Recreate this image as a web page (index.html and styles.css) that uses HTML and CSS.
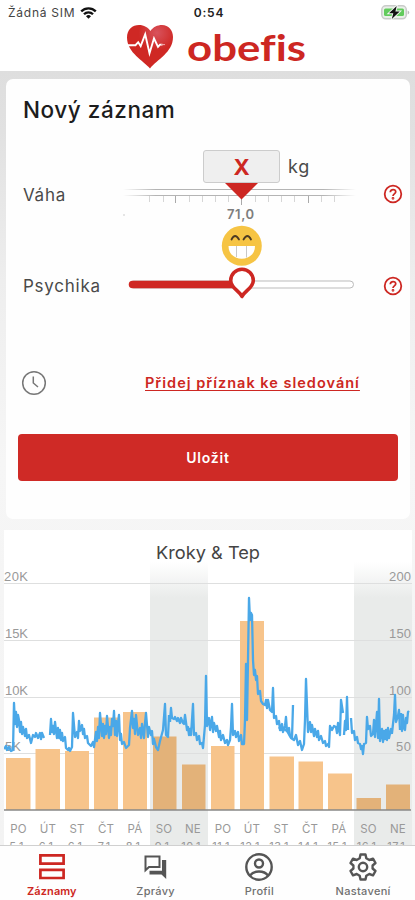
FILE: index.html
```html
<!DOCTYPE html>
<html lang="cs">
<head>
<meta charset="utf-8">
<title>obefis</title>
<link rel="stylesheet" href="styles.css">
</head>
<body>
<div class="app">
  <header class="header">
    <div class="status">
      <div class="carrier"><span class="sim">Žádná SIM</span>
        <svg width="17" height="12" viewBox="0 0 17 12" fill="none" stroke="#111" stroke-width="2.3"><path d="M1.2 4.4a10.3 10.3 0 0 1 14.6 0M4 7.3a6.3 6.3 0 0 1 9 0"/><path d="M6 9.2a3.6 3.6 0 0 1 5 0L8.5 11.8z" fill="#111" stroke="none"/></svg>
      </div>
      <span class="time">0:54</span>
      <svg class="battery" width="29" height="15" viewBox="0 0 29 15"><rect x=".8" y=".8" width="24.5" height="13" rx="4" fill="#e9f0e8" stroke="#c9cbc9" stroke-width="1.5"/><rect x="3" y="3.5" width="20" height="7.600" rx="1.500" fill="#62cb5c"/><path d="M26.7 5.500v4q1.500-.6 1.500-2t-1.500-2z" fill="#bbb"/><path d="M15.7 1 8 8.200h4.300L10.800 14l7.900-7.500h-4.300z" fill="#111" stroke="#f2f6f2" stroke-width="1.900" paint-order="stroke"/></svg>
    </div>
    <div class="brand">
      <svg width="48" height="45" viewBox="0 0 48 45">
        <defs><radialGradient id="shine" cx=".65" cy=".18" r=".4"><stop offset="0" stop-color="#d8535d"/><stop offset="1" stop-color="#cf2824"/></radialGradient></defs>
        <path d="M24 44.500C18 37 1 29 1 13.500 1 5.500 6.500 1 13 1c5 0 9 2.500 11.500 6C27 3 31.500 1 36 1c6.500 0 11 5 11 12 0 15.500-16 22.500-23 31.500z" fill="url(#shine)"/>
        <path d="M2 21.200h7.500l2.700-3 2.500 4 4.500-12 4.300 19L28 14.300l4 8.500 2-2.200h2.500" fill="none" stroke="#fff" stroke-width="1.900"/><path d="M35 20.600h4" stroke="#efaaaa" stroke-width="1"/>
      </svg>
      <svg width="122" height="40" viewBox="0 0 122 40"><text class="wordmark" x="0" y="35" textLength="119" lengthAdjust="spacingAndGlyphs">obefis</text></svg>
    </div>
  </header>

  <main class="content">
    <section class="card entry">
      <h1 class="title">Nový záznam</h1>
      <div class="row weight">
        <div class="label">Váha</div>
        <div class="control">
          <div class="input-line"><div class="value">X</div><span class="unit">kg</span></div>
          <svg class="ruler" width="240" height="23" viewBox="120 183 240 23">
            <defs><linearGradient id="fade" gradientUnits="userSpaceOnUse" x1="123" x2="356" y1="0" y2="0"><stop offset="0" stop-color="#b4b4b4" stop-opacity="0"/><stop offset=".14" stop-color="#b4b4b4"/><stop offset=".86" stop-color="#b4b4b4"/><stop offset="1" stop-color="#b4b4b4" stop-opacity="0"/></linearGradient></defs>
            <path d="M123 189h233v1H123zM123 195h233v1H123z" fill="url(#fade)"/>
            <path d="M149.500 196v6M163.500 196v6M189.500 196v6M202.500 196v6M215.500 196v6M228.500 196v6M255.500 196v6M268.500 196v6M281.500 196v6M294.500 196v6M321.500 196v6M334.500 196v6" stroke="#d6d6d6"/>
            <path d="M175.500 196v7M241.500 196v9M308.500 196v7" stroke="#aaa"/>
            <path d="M225 183h33l-16.500 16.500z" fill="#cd2722"/>
          </svg>
          <div class="scale"><i class="dot"></i><span class="reading">71,0</span></div>
        </div>
        <svg class="help" width="20" height="20" viewBox="0 0 20 20"><circle cx="10" cy="10" r="8.300"/><path d="M7.300 8.200C7.300 4.600 13 4.800 12.700 8c-.2 2-2.700 1.900-2.700 4.100"/><circle cx="10" cy="14.300" r=".5"/></svg>
      </div>
      <div class="row mood">
        <div class="label">Psychika</div>
        <svg class="control" width="240" height="76" viewBox="120 225 240 76">
          <rect x="130" y="281" width="223.500" height="7" rx="3.500" fill="#fff" stroke="#bbb"/>
          <path d="M132.500 284.500H240" stroke="#cf2823" stroke-width="7.500" stroke-linecap="round"/>
          <circle cx="241.800" cy="245.800" r="20" fill="#f6c444"/>
          <path d="M231.500 239.500q3.500-7 7.500 0M243.500 239.500q4-7 7.500 0" fill="none" stroke="#4d3a22" stroke-width="1.800" stroke-linecap="round"/>
          <path d="M228.500 246h26.500c0 17-26.500 17-26.500 0z" fill="#fff"/>
          <path d="M236.500 246v11M246.500 246v11.500" stroke="#c8c8c8"/>
          <path d="M242 296.500c-3-6-11.300-8.500-11.300-16a11.300 11.300 0 0 1 22.600 0C253.300 288 245 290.500 242 296.500z" fill="#fff" stroke="#cd2722" stroke-width="3.600" stroke-linejoin="round"/>
        </svg>
        <svg class="help" width="20" height="20" viewBox="0 0 20 20"><circle cx="10" cy="10" r="8.300"/><path d="M7.300 8.200C7.300 4.600 13 4.800 12.700 8c-.2 2-2.700 1.900-2.700 4.100"/><circle cx="10" cy="14.300" r=".5"/></svg>
      </div>
      <div class="extra">
        <svg width="26" height="26" viewBox="0 0 26 26" fill="none" stroke="#777" stroke-width="1.500"><circle cx="13" cy="13" r="11.300"/><path d="M12.300 6.500V13l4.700 4"/></svg>
        <a class="add">Přidej příznak ke sledování</a>
      </div>
      <button class="save">Uložit</button>
    </section>

    <section class="chart-card">
      <svg width="408" height="315" viewBox="4 530 408 315">
        <defs><linearGradient id="band" gradientUnits="userSpaceOnUse" x1="0" x2="0" y1="562" y2="598"><stop offset="0" stop-color="#e9ebea" stop-opacity="0"/><stop offset="1" stop-color="#e9ebea"/></linearGradient></defs>
        <path d="M150 560h58v285h-58zM354 560h58v285h-58z" fill="url(#band)"/>
        <path d="M4 583.500h408M4 640.500h408M4 697.500h408M4 753.500h408" stroke="#dedfdf"/>
        <g class="axis">
          <text x="4" y="581" textLength="24">20K</text><text x="5" y="638" textLength="23">15K</text><text x="5" y="695" textLength="23">10K</text><text x="5" y="751" textLength="16">5K</text>
          <text x="389" y="581" textLength="22">200</text><text x="389" y="638" textLength="22">150</text><text x="389" y="695" textLength="22">100</text><text x="396" y="751" textLength="15">50</text>
        </g>
        <path d="M6 758h24.500v52H6zM35.500 749H60v61H35.500zM65 751h24v59H65zM94 717.500h24v92.500H94zM123 712h24v98h-24zM211 746h23.500v64H211zM240 621h24v189h-24zM269.500 756.500H294V810h-24.500zM298.500 761.500H323V810h-24.500zM328 773.500h24V810h-24z" fill="#f7c48b"/>
        <path d="M153 736.500h23.500V810H153zM182 764.500h23.500V810H182zM356.500 798H381v12h-24.500zM386 784.500h24V810h-24z" fill="#e3b279"/>
        <path d="M4 810h407" stroke="#898887" stroke-width="1.500"/>
        <g class="pulse">
          <polyline points="4,749 6,746 7,750 9,747 11,751 13,750 14,703 15,724 16,712 17,727 18,715 19,720 20,732 21,722 22,734 23,727 25,736 26,729 27,738 29,735 31,743 33,735 35,737 36,733 38,738 40,733 41,739 42,733 44,738"/>
          <polyline points="50,735 51,719 52,732 53,726 54,734 55,722 57,738 58,728 59,738 60,730 61,740 62,733 63,741 65,737 66,748 68,750 69,748 70,751 72,747 73,713 75,737 77,732 78,738 79,721 80,731 82,725 83,734 84,729 85,738 87,736 88,743 91,746 93,742 94,747 96,732 97,741 98,727 99,738 100,713 102,736 103,724 104,738 105,726 106,734 107,716 109,738 110,727 111,735 112,719 113,726 114,711 115,735 116,721 117,736 118,723 119,715 120,740 121,734 122,744 124,742 126,748 129,745 130,728 132,711 133,728 134,719 135,734 136,715 138,735 140,728 141,738 142,724 144,738 145,723 146,713 148,737 149,727 151,735 152,731 153,744 154,739 156,747 158,750 160,741 163,730 165,704 166,735 168,737 169,715"/>
          <polyline points="170,722 171,708 172,718 174,719 175,717 177,721 178,718 180,723 181,718 183,723 184,724 185,715 187,730 188,727 189,735 190,729 191,735 193,704 194,735 196,733 197,740 199,736 200,744 202,743 203,748 205,725 206,676 207,726 209,718 210,730 212,717 213,732 214,723 216,731 217,726 219,737 220,731 221,740 223,735 225,743 227,740 228,745 230,740 231,727 232,704 233,735 235,731 236,737 238,732 239,741 241,735 242,744 244,744 245,720 246,664 247,720 248,660 249,598 250,620 251,613 252,615 253,660 254,675 255,670 256,680 257,676 258,694 260,691 261,701 263,704 265,705 266,700 267,708 268,700 270,710 272,712 273,688 274,718 276,716 277,724 279,721 280,730 282,724 283,732 285,726 286,717 287,731 289,728 290,736 292,738 293,705"/>
          <polyline points="279,727 281,730 284,729 287,731 291,738 294,740 296,735 298,745 300,741 302,750 304,744 305,720 306,679 308,732 309,726 310,722 311,732 312,725 314,736 315,729 317,737 318,731 319,740 321,736 323,743 325,741 326,746 328,744 329,747 330,726 332,730 334,726 336,727 337,733 338,723 340,735 341,700 343,713"/>
          <polyline points="344,735 345,721 346,730 347,697 348,730"/>
          <polyline points="351,718 352,733 354,731 355,740 357,737 358,743 360,744 361,749 362,746 363,754 364,744 366,743 367,717 368,729 370,726 371,736 373,734 374,720 375,737 377,712 378,738 379,699 380,741 382,729 383,742 384,731 385,739 386,730 387,740 388,728 389,738 391,729 392,733 394,715 395,695 396,722 398,716 399,710 400,730"/>
          <polyline points="401,713 402,731 403,715 404,728 405,730 406,718 407,723 408,712 409,711"/>
        </g>
        <text class="chart-title" x="156" y="559" textLength="104" lengthAdjust="spacingAndGlyphs">Kroky &amp; Tep</text>
        <g class="days"><text x="18.500" y="833">PO</text><text x="48" y="833">ÚT</text><text x="77" y="833">ST</text><text x="106" y="833">ČT</text><text x="135" y="833">PÁ</text><text x="164" y="833">SO</text><text x="193" y="833">NE</text><text x="223" y="833">PO</text><text x="252" y="833">ÚT</text><text x="281" y="833">ST</text><text x="310" y="833">ČT</text><text x="339" y="833">PÁ</text><text x="368.500" y="833">SO</text><text x="398" y="833">NE</text></g>
        <g class="dates"><text x="18.500" y="850">5.1.</text><text x="48" y="850">6.1.</text><text x="77" y="850">6.1.</text><text x="106" y="850">7.1.</text><text x="135" y="850">8.1.</text><text x="164" y="850">9.1.</text><text x="193" y="850">10.1.</text><text x="223" y="850">11.1.</text><text x="252" y="850">12.1.</text><text x="281" y="850">13.1.</text><text x="310" y="850">14.1.</text><text x="339" y="850">15.1.</text><text x="368.500" y="850">16.1.</text><text x="398" y="850">17.1.</text></g>
      </svg>
    </section>
  </main>

  <nav class="tabs">
    <div class="tab active"><svg width="30" height="30" viewBox="0 0 30 30" fill="none" stroke="#cd2722" stroke-width="2.700"><path d="M3.400 3.400h23.200v8.200H3.400zM3.400 17.800h23.200v8.200H3.400z"/></svg><span>Záznamy</span></div>
    <div class="tab"><svg width="30" height="30" viewBox="0 0 30 30"><path d="M4.500 4.500h14v10.500H8l-3.500 3.300z" fill="none" stroke="#555" stroke-width="2"/><path d="M21 8h4.200v19L20.500 22.500H8.500v-3.800H21z" fill="#555"/></svg><span>Zprávy</span></div>
    <div class="tab"><svg width="30" height="30" viewBox="0 0 30 30" fill="none" stroke="#555" stroke-width="2.400"><circle cx="15" cy="15" r="12.700"/><circle cx="15" cy="11.500" r="4"/><path d="M6 23.500c4-5.300 14-5.300 18 0"/></svg><span>Profil</span></div>
    <div class="tab"><svg width="30" height="30" viewBox="0 0 30 30" fill="none" stroke="#555" stroke-width="2.400" stroke-linejoin="round"><path d="m12.500 2.500h5l.8 3.800 3 1.700 3.700-1.300 2.500 4.300-2.900 2.500v3l2.900 2.500-2.500 4.300-3.700-1.300-3 1.700-.8 3.800h-5l-.8-3.800-3-1.700L5 23.300 2.500 19l2.900-2.500v-3L2.500 11 5 6.700 8.700 8l3-1.700z"/><circle cx="15" cy="15" r="4.200"/></svg><span>Nastavení</span></div>
  </nav>
</div>
</body>
</html>
```
FILE: styles.css
```css
* { box-sizing: border-box; }
body { margin: 0; font-family: Inter, "Liberation Sans", sans-serif; color: #333; }
svg { display: block; flex: none; }
.app { width: 415px; height: 900px; display: flex; flex-direction: column; overflow: hidden; background: #fff; }
.header { height: 71px; flex: none; background: #fff; }
.status { height: 23px; display: grid; grid-template-columns: 1fr 60px 1fr; align-items: center; padding: 2px 5px 0 8px; }
.carrier { display: flex; align-items: center; gap: 5px; color: #444; font-size: 12px; white-space: nowrap; }
.sim { letter-spacing: .75px; }
.time { font-size: 12px; font-weight: 600; color: #222; letter-spacing: .8px; text-align: center; }
.battery { justify-self: end; }
.brand { display: flex; align-items: flex-start; padding: 1px 0 0 126px; gap: 13px; }
.brand svg + svg { margin-top: 2px; }
.wordmark { font: 700 37px Lato, sans-serif; font-variant-ligatures: none; fill: #cd2722; }
.content { flex: 1; min-height: 0; padding: 8px 3px 0 4px; background: linear-gradient(#dedede 0, #e1e1e1 60px, #eee 210px, #f6f6f6 390px, #f3f3f3 100%); overflow: hidden; }
.card { margin: 0 2px 11px; height: 440px; border-radius: 7px; background: #fefefe; padding: 15px 12px 0; }
.title { margin: 0 0 0 5px; height: 31px; line-height: 31px; font-size: 22.500px; font-weight: 500; color: #1c1c1c; letter-spacing: .55px; }
.row { display: grid; grid-template-columns: 97px 240px 1fr; margin-left: 5px; }
.label { font-size: 17px; color: #4a4a4a; letter-spacing: .75px; }
.weight { margin-top: 25px; height: 75px; }
.weight .label { padding-top: 35px; }
.input-line { height: 33px; padding-left: 83px; display: flex; gap: 8px; }
.value { width: 77px; height: 33px; border: 1px solid #ccc; border-radius: 3px; background: #efefef; color: #cd2722; font-size: 22px; font-weight: 700; text-align: center; line-height: 32px; }
.unit { font-size: 18px; line-height: 34px; color: #4a4a4a; letter-spacing: .8px; }
.scale { display: flex; align-items: center; height: 17px; }
.dot { width: 2px; height: 2px; margin-left: 3px; background: #ddd; border-radius: 1px; }
.reading { margin-left: 102px; font-size: 13px; line-height: 17px; font-weight: 600; color: #7d7d7d; letter-spacing: .6px; }
.help { fill: none; stroke: #cd2722; stroke-width: 1.800px; margin: 34px 0 0 23px; }
.mood { height: 76px; }
.mood .label { padding-top: 51px; }
.mood .help { margin-top: 51px; }
.extra { display: flex; align-items: center; height: 30px; margin: 67px 0 36px 3px; gap: 98px; }
.add { margin-top: -2px; color: #cd2722; font-size: 14.500px; font-weight: 600; letter-spacing: 1.010px; text-decoration: underline; text-underline-offset: 2px; text-decoration-thickness: 1px; text-decoration-skip-ink: none; white-space: nowrap; }
.save { display: block; width: 380px; height: 47px; border: 0; border-radius: 4px; background: #cf2a26; color: #fff; font: 600 14px Inter, sans-serif; letter-spacing: .8px; }
.chart-card { background: #fff; }
.axis { font: 13px "Liberation Sans", sans-serif; fill: #999; }
.pulse { fill: none; stroke: #4aa8e8; stroke-width: 2.300px; stroke-linejoin: round; }
.chart-title { font: 17.500px Inter, sans-serif; fill: #444; }
.days { font: 11.500px Inter, sans-serif; fill: #999; text-anchor: middle; letter-spacing: .2px; }
.dates { font: 11px Inter, sans-serif; fill: #999; text-anchor: middle; letter-spacing: .5px; }
.tabs { height: 55px; flex: none; display: grid; grid-template-columns: repeat(4, 1fr); border-top: 1px solid #d0d0d0; background: #fefefe; }
.tab { display: flex; flex-direction: column; align-items: center; padding-top: 6px; font-size: 11px; font-weight: 500; line-height: 19px; color: #707070; letter-spacing: .3px; }
.active { color: #cd2722; font-weight: 600; letter-spacing: .1px; }
```
